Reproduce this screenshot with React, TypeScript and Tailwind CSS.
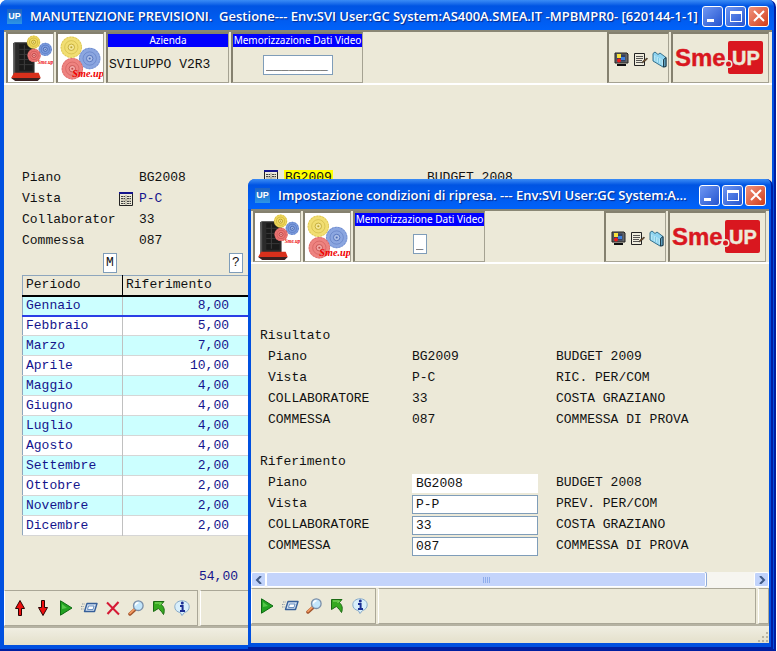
import type { ReactNode } from "react";

const months: [string, string][] = [
  ["Gennaio", "8,00"],
  ["Febbraio", "5,00"],
  ["Marzo", "7,00"],
  ["Aprile", "10,00"],
  ["Maggio", "4,00"],
  ["Giugno", "4,00"],
  ["Luglio", "4,00"],
  ["Agosto", "4,00"],
  ["Settembre", "2,00"],
  ["Ottobre", "2,00"],
  ["Novembre", "2,00"],
  ["Dicembre", "2,00"],
];

function Gear({ x, y, r, fill, line }: { x: number; y: number; r: number; fill: string; line: string }) {
  return (
    <g stroke={line} fill="none">
      <circle cx={x} cy={y} r={r} fill={fill} stroke="none" />
      <circle cx={x} cy={y} r={r - 0.5} strokeWidth="1" strokeDasharray="1.6 1.4" opacity="0.4" />
      <circle cx={x} cy={y} r={r * 0.62} strokeWidth="0.7" opacity="0.6" />
      <circle cx={x} cy={y} r={r * 0.3} fill="#ffffff" fillOpacity="0.3" strokeWidth="0.8" />
      <circle cx={x} cy={y} r={r * 0.1} fill={line} stroke="none" />
    </g>
  );
}

function ServerPicture() {
  return (
    <svg viewBox="0 0 44 47" className="size-full" role="img" aria-label="Server Sme.up">
      <rect width="44" height="47" fill="#fff" />
      <path d="M5 9l2-1h15l4 2v30H7z" fill="#2b2b2b" />
      <path d="M5 9l2-1v31l-2 2z" fill="#555" />
      <path d="M11 10h13v26H11z" fill="#1a1a1a" />
      <path d="M11 15h13M11 20h13M11 25h13M11 30h13" stroke="#4a4a4a" strokeWidth="0.6" />
      <path d="M16 11v24" stroke="#3d3d3d" />
      <path d="M6 38h24l2 5H3z" fill="#d8301c" />
      <path d="M3 43h29l-3 3H7z" fill="#3a2020" />
      <Gear x={25} y={8} r={6.5} fill="#efd85e" line="#b49a20" />
      <Gear x={36.5} y={15} r={6.5} fill="#7b9bdd" line="#3e61ad" />
      <Gear x={25.5} y={21} r={6.5} fill="#ec7775" line="#b73c3c" />
      <text x="29" y="29" fontSize="5" fontWeight="bold" fontStyle="italic" fill="#ee1111" fontFamily="Liberation Serif, serif">Sme.up</text>
    </svg>
  );
}

function GearsPicture() {
  return (
    <svg viewBox="0 0 44 47" className="size-full" role="img" aria-label="Sme.up">
      <rect width="44" height="47" fill="#fff" />
      <Gear x={13} y={13} r={10.5} fill="#f1de72" line="#bda42d" />
      <Gear x={31} y={24} r={10.5} fill="#8ba6e0" line="#4a6ab5" />
      <Gear x={14} y={34} r={10.5} fill="#ee8380" line="#c04a48" />
      <text x="14" y="42" fontSize="10" fontWeight="bold" fontStyle="italic" fill="#f00000" fontFamily="Liberation Serif, serif">Sme.up</text>
    </svg>
  );
}

function Logo() {
  return (
    <svg viewBox="0 0 90 34" className="h-[34px] w-[90px]" role="img" aria-label="Sme.UP">
      <text x="1" y="25" fontSize="24" fontWeight="bold" fill="#d9171f" stroke="#d9171f" strokeWidth="0.4" fontFamily="Liberation Sans, sans-serif">Sme</text>
      <rect x="54" y="0" width="35" height="33" rx="2" fill="#d9171f" />
      <circle cx="54.5" cy="23" r="4" fill="#ece9d8" />
      <circle cx="54.5" cy="23" r="2.5" fill="#d9171f" />
      <text x="58" y="24" fontSize="20" fontWeight="bold" fill="#ece9d8" stroke="#ece9d8" strokeWidth="0.4" fontFamily="Liberation Sans, sans-serif">UP</text>
    </svg>
  );
}

function MonitorIcon() {
  return (
    <svg viewBox="0 0 15 15" className="size-[15px]">
      <path d="M1 1h12l1 1v9H1z" fill="#666" stroke="#222" />
      <path d="M2.5 2.5h9v7h-9z" fill="#33405e" />
      <path d="M3 2h4v4H3z" fill="#f7e23b" />
      <path d="M7 5h4v3H7z" fill="#3b7fe0" />
      <circle cx="5" cy="8.5" r="2" fill="#ee1c1c" />
      <path d="M3 12h9v2H3z" fill="#111" />
    </svg>
  );
}

function NotesIcon() {
  return (
    <svg viewBox="0 0 15 15" className="size-[15px]">
      <path d="M1.5 1.5h10v12h-10z" fill="#efecdd" stroke="#222" />
      <path d="M3 4.5h7M3 6.5h7M3 8.5h6M3 10.5h6" stroke="#444" strokeWidth="0.9" />
      <path d="M14 6l-4 3-1 2 2-1 3.5-3z" fill="#8a5a28" stroke="#222" strokeWidth="0.6" />
    </svg>
  );
}

function FolderIcon() {
  return (
    <svg viewBox="0 0 15 17" className="h-[17px] w-[15px]">
      <path d="M1 2.500L3 1l3 2.500L8 2l6 4.500v9L11 16 1 10z" fill="#8dd3f0" stroke="#37718c" />
      <path d="M2 4l9 5v5.500L2 9.500z" fill="#b4e6f8" />
      <path d="M4 5.500v5M6.500 7v5M9 8.500v5" stroke="#6bbbd9" strokeWidth="0.7" />
      <path d="M11.5 8.500L14 6.500v9l-2.500.5z" fill="#5c9ebd" stroke="#17303c" strokeWidth="0.9" />
    </svg>
  );
}

function GridIcon() {
  return (
    <svg viewBox="0 0 14 14" className="size-[14px] shrink-0">
      <path d="M.5.500h13v13H.5z" fill="#ece9d8" stroke="#222" />
      <path d="M0 1h14" stroke="#14148c" strokeWidth="2" />
      <path d="M2 4.500h4M8 4.500h4M2 6.500h4M8 6.500h4M2 9.500h4M8 9.500h4M2 11.500h4M8 11.500h4" stroke="#444" strokeDasharray="2.500 .5 1 10" />
      <path d="M7 3v10M2 8h10" stroke="#8a8775" strokeWidth="0.7" />
    </svg>
  );
}

function ArrowV({ down }: { down?: boolean }) {
  return (
    <svg viewBox="0 0 16 16" className="size-4">
      <path
        d={down ? "M6.500.500h3v7h3L8 15.500 3.500 7.500h3z" : "M6.500 15.500h3v-7h3L8 .5 3.500 8.500h3z"}
        fill="#ee0f0f"
        stroke="#2a0505"
      />
    </svg>
  );
}

function PlayIcon() {
  return (
    <svg viewBox="0 0 16 16" className="size-4">
      <path d="M2.500.800v14.400L14 8z" fill="#22a322" stroke="#0d6a12" />
      <path d="M4 4v5l5-1z" fill="#63cf58" opacity="0.8" />
    </svg>
  );
}

function EraseIcon() {
  return (
    <svg viewBox="0 0 17 16" className="h-4 w-[17px]">
      <path d="M6 3.500h10l-2.500 8H3.500z" fill="#d4e2f2" stroke="#365f99" strokeWidth="1.4" strokeLinejoin="round" />
      <path d="M7.500 6h5.500l-1 3.500H6.500z" fill="#fff" stroke="#4d7bb5" strokeWidth="0.8" />
      <path d="M1 4h3M0 6.500h3M0 9h2.500" stroke="#8b97a5" strokeDasharray="1 .6" />
    </svg>
  );
}

function CrossIcon() {
  return (
    <svg viewBox="0 0 16 16" className="size-4">
      <path d="M2 2.500l12 12M13.500 2L2.500 14" stroke="#d51a35" strokeWidth="2.1" fill="none" />
    </svg>
  );
}

function LensIcon() {
  return (
    <svg viewBox="0 0 16 16" className="size-4">
      <path d="M7 9.500l-5 4.500" stroke="#a2532b" strokeWidth="3.5" strokeLinecap="round" />
      <path d="M6.500 9L2 13.300" stroke="#f29a60" strokeWidth="1.8" strokeLinecap="round" />
      <circle cx="10.3" cy="5.7" r="4.8" fill="#c3e6fb" stroke="#7a8fa9" strokeWidth="1.3" />
      <path d="M7.500 5.500a3 3 0 0 1 3-2.700" stroke="#fff" strokeWidth="1.4" fill="none" />
    </svg>
  );
}

function ReturnIcon() {
  return (
    <svg viewBox="0 0 16 16" className="size-4">
      <path d="M2.500 1.500h10.500l-2.700 3c3 2.500 3.700 6 2.200 10-1.500-2.500-3.200-4.300-5.200-6l-4.800 3z" fill="#35a91f" stroke="#1b6a13" />
      <path d="M4 3h6.500L8.500 5" stroke="#8fe070" fill="none" />
    </svg>
  );
}

function InfoIcon() {
  return (
    <svg viewBox="0 0 16 16" className="size-4">
      <path d="M8 .800c4.200 0 7.200 2.600 7.200 6 0 3-2 5-4.700 5.700L8 15.500l-1.800-3C3 12 .8 9.900.8 6.800c0-3.400 3-6 7.200-6z" fill="#d9effb" stroke="#86a9c8" />
      <circle cx="8.3" cy="3" r="1.5" fill="#1c2f94" />
      <path d="M6 6h2.600v4.500M6 11h5" stroke="#1c2f94" strokeWidth="2" fill="none" />
    </svg>
  );
}

function IconButton({ label, children }: { label: string; children: ReactNode }) {
  return (
    <button type="button" aria-label={label} className="flex shrink-0 items-center justify-center">
      {children}
    </button>
  );
}

function Caption({ title }: { title: string }) {
  const base = "flex size-[21px] items-center justify-center rounded-[3px] border border-white";
  return (
    <header className="flex h-[30px] shrink-0 items-center gap-2 bg-linear-to-b from-[#3a8cf5] via-[#0054e3] via-20% to-[#0062fa] pt-[2px] pr-[5px] pl-[7px]">
      <span className="flex size-[15px] shrink-0 items-center justify-center bg-linear-to-b from-[#1c62c4] to-[#2d95e6] font-['Liberation_Sans',sans-serif] text-[9px] font-bold text-white">
        UP
      </span>
      <h1 className="min-w-0 flex-1 font-['Open_Sans',sans-serif] text-[13px] leading-5 font-semibold whitespace-pre text-white [text-shadow:1px_1px_1px_#06288a]">
        {title}
      </h1>
      <div className="flex gap-[2px]">
        <button type="button" aria-label="Riduci" className={`${base} items-end! justify-start! bg-linear-to-br from-[#6f97f2] to-[#2553cf] p-1`}>
          <span className="h-[3px] w-[7px] bg-white" />
        </button>
        <button type="button" aria-label="Ingrandisci" className={`${base} bg-linear-to-br from-[#6f97f2] to-[#2553cf]`}>
          <span className="h-[11px] w-[12px] border border-t-[3px] border-white" />
        </button>
        <button type="button" aria-label="Chiudi" className={`${base} bg-linear-to-br from-[#f0917a] to-[#d03a12]`}>
          <svg viewBox="0 0 12 12" className="size-3">
            <path d="M1 1l10 10M11 1L1 11" stroke="#fff" strokeWidth="2" />
          </svg>
        </button>
      </div>
    </header>
  );
}

function Cell({ className, children }: { className: string; children: ReactNode }) {
  return (
    <div className={`h-[51px] shrink-0 border-t-2 border-r border-b border-l-2 border-t-[#85816f] border-r-[#a5a292] border-b-[#a5a292] border-l-[#85816f] ${className}`}>
      {children}
    </div>
  );
}

const fieldTitle =
  "block h-[13px] bg-[#0000ff] text-center font-['Noto_Sans',sans-serif] text-[10px] leading-[13px] whitespace-nowrap text-white";

function TopBar({ company, field, value, fieldClass }: { company?: string; field: string; value: string; fieldClass: string }) {
  return (
    <div className="flex h-[55px] shrink-0 gap-[2px] border-t-2 border-b-2 border-t-[#8a8775] border-b-white pr-[3px] pl-[2px]">
      <Cell className="w-[48px] bg-white">
        <ServerPicture />
      </Cell>
      <Cell className="w-[48px] bg-white">
        <GearsPicture />
      </Cell>
      {company && (
        <Cell className="w-[123px]">
          <div className={fieldTitle}>Azienda</div>
          <p className="px-px pt-[7px] whitespace-nowrap">{company}</p>
        </Cell>
      )}
      <Cell className="w-[132px]">
        <label htmlFor={field} className={fieldTitle}>Memorizzazione Dati Video</label>
        <div className="flex justify-center pt-2">
          <input id={field} defaultValue={value} className={`h-5 border border-[#7f9db9] bg-white px-[2px] ${fieldClass}`} />
        </div>
      </Cell>
      <Cell className="ml-auto flex w-[62px] items-center gap-1 pt-[2px] pl-[5px]">
        <IconButton label="Video"><MonitorIcon /></IconButton>
        <IconButton label="Note"><NotesIcon /></IconButton>
        <IconButton label="Cartella"><FolderIcon /></IconButton>
      </Cell>
      <Cell className="flex w-[98px] items-center pl-px">
        <Logo />
      </Cell>
    </div>
  );
}

function BottomBar({ full }: { full?: boolean }) {
  const cell = "border border-t-[#aaa797] border-r-[#aaa797] border-b-[#aaa797] border-l-white";
  return (
    <>
      <div className="flex h-[36px] shrink-0 gap-[2px]">
        <div className={`flex shrink-0 items-center gap-[7px] pl-[7px] ${cell} ${full ? "w-[194px]" : "w-[125px]"}`}>
          {full && (
            <>
              <IconButton label="Su"><ArrowV /></IconButton>
              <IconButton label="Giù"><ArrowV down /></IconButton>
            </>
          )}
          <IconButton label="Esegui"><PlayIcon /></IconButton>
          <IconButton label="Pulisci"><EraseIcon /></IconButton>
          {full && <IconButton label="Elimina"><CrossIcon /></IconButton>}
          <IconButton label="Cerca"><LensIcon /></IconButton>
          <IconButton label="Ritorno"><ReturnIcon /></IconButton>
          <IconButton label="Informazioni"><InfoIcon /></IconButton>
        </div>
        <div className={`flex-1 ${cell}`} />
        <div className={`w-[11px] ${cell}`} />
      </div>
      <footer className="flex h-[19px] shrink-0 items-end justify-end border-t-2 border-[#b5b2a2] bg-linear-to-b from-[#f0eee2] to-[#e4e0cb]">
        <svg viewBox="0 0 12 12" className="size-3">
          <path d="M9 2h2M5 6h2M9 6h2M1 10h2M5 10h2M9 10h2" stroke="#b8b4a0" strokeWidth="2" />
        </svg>
      </footer>
    </>
  );
}

const frame =
  "flex flex-col overflow-hidden rounded-t-[7px] border-r-2 border-b-2 border-[#001ea0] bg-[#0050e0] font-['Liberation_Mono',monospace] text-[13px] leading-[21px] text-[#111111]";
const body = "mr-[2px] mb-[4px] flex min-h-0 flex-1 flex-col bg-[#ece9d8]";

function MainWindow() {
  return (
    <main className={`${frame} mr-px h-screen`}>
      <Caption title="MANUTENZIONE PREVISIONI.  Gestione--- Env:SVI User:GC System:AS400A.SMEA.IT -MPBMPR0- [620144-1-1]" />
      <div className={`${body} ml-[4px]`}>
        <TopBar company="SVILUPPO V2R3" field="memo-main" value="________" fieldClass="w-[70px]" />
        <div className="min-h-0 flex-1 overflow-hidden pt-[82px] pl-[18px]">
          <dl className="grid grid-cols-[97px_20px_125px_20px_143px_1fr]">
            <dt className="col-span-2">Piano</dt>
            <dd>BG2008</dd>
            <dd className="pt-[3px]"><GridIcon /></dd>
            <dd><span className="bg-[#ffff00] px-px">BG2009</span></dd>
            <dd>BUDGET 2008</dd>
            <dt>Vista</dt>
            <dd className="flex items-center"><GridIcon /></dd>
            <dd className="col-span-4 text-[#14148c]">P-C</dd>
            <dt className="col-span-2">Collaborator</dt>
            <dd className="col-span-4">33</dd>
            <dt className="col-span-2">Commessa</dt>
            <dd className="col-span-4">087</dd>
          </dl>
          <div className="flex gap-[112px] pt-[2px] pl-[81px]">
            <button type="button" className="h-5 w-[14px] border border-[#7f9db9] bg-white leading-4">M</button>
            <button type="button" className="h-5 w-[14px] border border-[#7f9db9] bg-white leading-4">?</button>
          </div>
          <table className="mt-[2px] w-[240px] border-collapse border border-[#8ea6bd] leading-[18px]">
            <thead>
              <tr className="h-[20px] border-b-2 border-black text-left">
                <th className="w-[100px] border-r border-black pl-[3px] font-normal">Periodo</th>
                <th className="pl-[3px] font-normal">Riferimento</th>
              </tr>
            </thead>
            <tbody>
              {months.map(([name, value], i) => (
                <tr key={name} className={`h-5 text-[#14148c] ${i === 0 ? "border-b-2 border-[#2a3fe6]" : "border-b border-[#d6d6d6]"} ${i % 2 ? "bg-white" : "bg-[#ccffff]"}`}>
                  <td className="border-r border-r-[#c0c0c0] pl-[3px]">{name}</td>
                  <td className="pr-[32px] text-right">{value}</td>
                </tr>
              ))}
            </tbody>
          </table>
          <p className="w-[216px] pt-[30px] text-right text-[#14148c]">54,00</p>
        </div>
        <BottomBar full />
      </div>
    </main>
  );
}

const result = [
  ["Piano", "BG2009", "BUDGET 2009"],
  ["Vista", "P-C", "RIC. PER/COM"],
  ["COLLABORATORE", "33", "COSTA GRAZIANO"],
  ["COMMESSA", "087", "COMMESSA DI PROVA"],
];
const reference = [
  ["Piano", "BG2008", "BUDGET 2008"],
  ["Vista", "P-P", "PREV. PER/COM"],
  ["COLLABORATORE", "33", "COSTA GRAZIANO"],
  ["COMMESSA", "087", "COMMESSA DI PROVA"],
];

function ScrollButton({ right }: { right?: boolean }) {
  return (
    <button type="button" aria-label={right ? "Destra" : "Sinistra"} className="flex h-[15px] w-[15px] items-center justify-center rounded-[2px] border border-white bg-[#c1d3fb]">
      <svg viewBox="0 0 8 8" className="size-2">
        <path d={right ? "M2 0l4 4-4 4" : "M6 0L2 4l4 4"} stroke="#405a86" strokeWidth="2" fill="none" />
      </svg>
    </button>
  );
}

function Dialog() {
  return (
    <section role="dialog" aria-label="Impostazione condizioni di ripresa" className={`${frame} absolute top-[179px] right-[4px] bottom-[2px] left-[248px]`}>
      <Caption title="Impostazione condizioni di ripresa. --- Env:SVI User:GC System:A..." />
      <div className={`${body} ml-[3px]`}>
        <TopBar field="memo-dialog" value="_" fieldClass="w-[14px]" />
        <div className="min-h-0 flex-1 overflow-hidden pt-[61px] pl-[9px]">
          <h2>Risultato</h2>
          <dl className="grid grid-cols-[144px_144px_1fr] pl-2">
            {result.map(([name, code, text]) => (
              <div key={name} className="contents">
                <dt>{name}</dt>
                <dd>{code}</dd>
                <dd>{text}</dd>
              </div>
            ))}
          </dl>
          <h2 className="pt-[21px]">Riferimento</h2>
          <div className="grid grid-cols-[144px_144px_1fr] pl-2">
            {reference.map(([name, code, text], i) => (
              <div key={name} className="contents">
                <label htmlFor={`ref-${name}`}>{name}</label>
                <input
                  id={`ref-${name}`}
                  defaultValue={code}
                  autoFocus={i === 3}
                  onFocus={(e) => e.currentTarget.setSelectionRange(code.length, code.length)}
                  className={`mt-[2px] h-[19px] w-[126px] border bg-white px-[3px] outline-none ${i === 0 ? "border-white" : "border-[#7f9db9]"}`}
                />
                <span>{text}</span>
              </div>
            ))}
          </div>
        </div>
        <div className="flex h-4 shrink-0 bg-[#f6f5f0]">
          <ScrollButton />
          <div className="flex h-[15px] w-[440px] items-center justify-center gap-px rounded-[2px] border border-white bg-[#c4d4fb] shadow-[1px_0_#8faad8]">
            <span className="h-[6px] w-px bg-[#8fadec]" />
            <span className="h-[6px] w-px bg-[#8fadec]" />
            <span className="h-[6px] w-px bg-[#8fadec]" />
            <span className="h-[6px] w-px bg-[#8fadec]" />
          </div>
          <div className="ml-auto"><ScrollButton right /></div>
        </div>
        <BottomBar />
      </div>
    </section>
  );
}

export default function App() {
  return (
    <div className="relative h-screen overflow-hidden bg-white">
      <MainWindow />
      <Dialog />
    </div>
  );
}
